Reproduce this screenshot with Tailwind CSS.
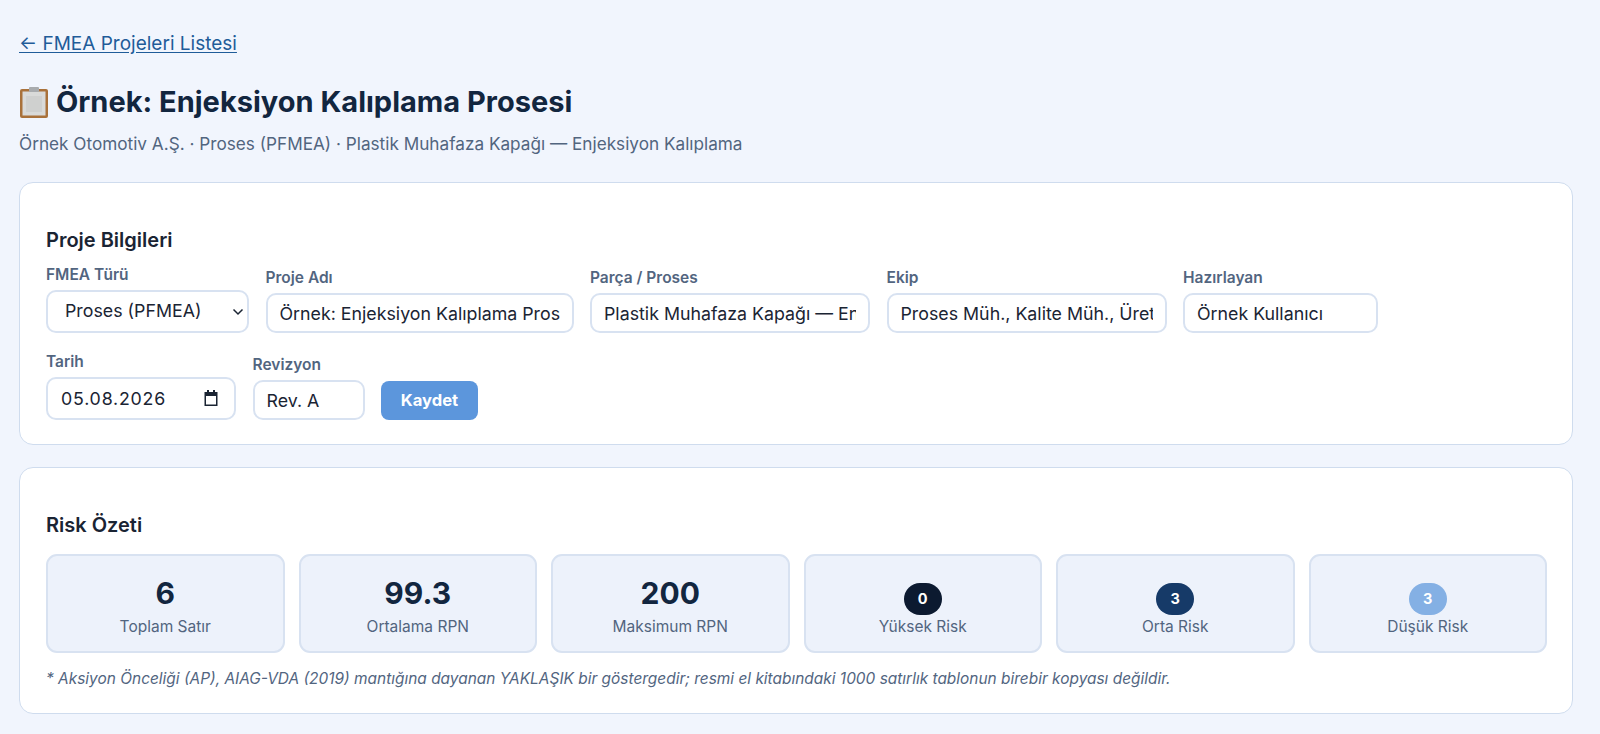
<!DOCTYPE html>
<html lang="tr">
<head>
  <meta charset="UTF-8" />
  <meta name="viewport" content="width=device-width, initial-scale=1.0"/>
  <title>Örnek: Enjeksiyon Kalıplama Prosesi</title>
  <script src="https://cdn.jsdelivr.net/npm/@tailwindcss/browser@4"></script>
</head>
<body class="bg-[#f1f5fd] text-[#12263f] font-['Inter','Liberation_Sans',sans-serif] overflow-hidden">
<div class="pl-[19px] pt-[32px] w-[1573px]">
  <a href="#" class="block text-[19px] leading-[24px] text-[#1f5c99] underline underline-offset-2">← FMEA Projeleri Listesi</a>

  <!-- Header -->
  <h1 class="flex items-center gap-[6px] mt-[26px] text-[29px] leading-[40px] font-bold text-[#12263f]">
    <svg width="31" height="32" viewBox="0 0 31 32" class="shrink-0">
      <rect x="1" y="3" width="28" height="29" rx="2" fill="#a9713a"/>
      <rect x="3.5" y="5.5" width="23" height="24" fill="#d9dad9"/>
      <rect x="7" y="10" width="16" height="16" fill="#cfd0cf"/>
      <rect x="10" y="1" width="10" height="5" rx="1" fill="#a8abae"/>
    </svg>
    <span>Örnek: Enjeksiyon Kalıplama Prosesi</span>
  </h1>
  <p class="mt-[11px] text-[17.2px] leading-[22px] text-[#52657f]">Örnek Otomotiv A.Ş. · Proses (PFMEA) · Plastik Muhafaza Kapağı — Enjeksiyon Kalıplama</p>

  <!-- Proje Bilgileri -->
  <section class="mt-[27px] h-[263px] bg-white border border-[#cfdcee] rounded-[14px] pl-[26px] pr-[25px] pt-[44px]">
    <h2 class="text-[20px] leading-[26px] font-semibold text-[#1a2433]">Proje Bilgileri</h2>
    <div class="mt-[13px] flex items-end gap-[16.5px]">
      <label class="block">
        <span class="block text-[15.5px] leading-[18px] font-semibold text-[#52657f] mb-[6px]">FMEA Türü</span>
        <div class="relative">
          <select class="block appearance-none w-[203px] h-[43px] border-2 border-[#d8e2f1] rounded-[10px] pl-[17px] text-[17.8px] text-[#1a2433] bg-white">
            <option>Proses (PFMEA)</option>
          </select>
          <svg width="12" height="8" viewBox="0 0 12 8" class="absolute right-[5px] top-[18px]" fill="none" stroke="#1a2433" stroke-width="1.5"><path d="M1.5 1.5 6 6l4.500-4.500"/></svg>
        </div>
      </label>
      <label class="block">
        <span class="block text-[15.5px] leading-[18px] font-semibold text-[#52657f] mb-[6px]">Proje Adı</span>
        <input type="text" value="Örnek: Enjeksiyon Kalıplama Prosesi" class="block w-[308px] h-[40px] border-2 border-[#d8e2f1] rounded-[10px] px-[12px] text-[17.8px] text-[#1a2433]" />
      </label>
      <label class="block">
        <span class="block text-[15.5px] leading-[18px] font-semibold text-[#52657f] mb-[6px]">Parça / Proses</span>
        <input type="text" value="Plastik Muhafaza Kapağı — Enjeksiyon Kalıplama" class="block w-[280px] h-[40px] border-2 border-[#d8e2f1] rounded-[10px] px-[12px] text-[17.8px] text-[#1a2433]" />
      </label>
      <label class="block">
        <span class="block text-[15.5px] leading-[18px] font-semibold text-[#52657f] mb-[6px]">Ekip</span>
        <input type="text" value="Proses Müh., Kalite Müh., Üretim Sorumlusu" class="block w-[280px] h-[40px] border-2 border-[#d8e2f1] rounded-[10px] px-[12px] text-[17.8px] text-[#1a2433]" />
      </label>
      <label class="block">
        <span class="block text-[15.5px] leading-[18px] font-semibold text-[#52657f] mb-[6px]">Hazırlayan</span>
        <input type="text" value="Örnek Kullanıcı" class="block w-[195px] h-[40px] border-2 border-[#d8e2f1] rounded-[10px] px-[12px] text-[17.8px] text-[#1a2433]" />
      </label>
    </div>
    <div class="mt-[20px] flex items-end gap-[16.5px]">
      <label class="block">
        <span class="block text-[15.5px] leading-[18px] font-semibold text-[#52657f] mb-[6px]">Tarih</span>
        <div class="relative">
          <input type="text" value="05.08.2026" class="block w-[190px] h-[43px] border-2 border-[#d8e2f1] rounded-[10px] pl-[13px] text-[17.8px] tracking-[0.8px] text-[#1a2433]" />
          <svg width="16" height="16" viewBox="0 0 16 16" class="absolute right-[17px] top-[13px]" fill="#1a2433"><path d="M4 0h2v2h4V0h2v2h2.500v14H1.500V2H4zM3 6v8.500h10V6z"/></svg>
        </div>
      </label>
      <label class="block">
        <span class="block text-[15.5px] leading-[18px] font-semibold text-[#52657f] mb-[6px]">Revizyon</span>
        <input type="text" value="Rev. A" class="block w-[112px] h-[40px] border-2 border-[#d8e2f1] rounded-[10px] px-[12px] text-[17.8px] text-[#1a2433]" />
      </label>
      <button class="w-[97px] h-[39px] bg-[#5c96dc] text-white text-[16.6px] font-bold rounded-[8px]">Kaydet</button>
    </div>
  </section>

  <!-- Risk Özeti -->
  <section class="mt-[22px] h-[247px] bg-white border border-[#cfdcee] rounded-[14px] pl-[26px] pr-[25px] pt-[44px]">
    <h2 class="text-[20px] leading-[26px] font-semibold text-[#1a2433]">Risk Özeti</h2>
    <div class="mt-[16px] grid grid-cols-6 gap-[14px]">
      <div class="h-[99px] bg-[#edf2fb] border-2 border-[#d8e2f1] rounded-[11px] flex flex-col items-center pt-[19px]">
        <div class="text-[30px] leading-[36px] font-bold text-[#12263f]">6</div>
        <div class="mt-[6px] text-[15.5px] leading-[20px] text-[#52657f]">Toplam Satır</div>
      </div>
      <div class="h-[99px] bg-[#edf2fb] border-2 border-[#d8e2f1] rounded-[11px] flex flex-col items-center pt-[19px]">
        <div class="text-[30px] leading-[36px] font-bold text-[#12263f]">99.3</div>
        <div class="mt-[6px] text-[15.5px] leading-[20px] text-[#52657f]">Ortalama RPN</div>
      </div>
      <div class="h-[99px] bg-[#edf2fb] border-2 border-[#d8e2f1] rounded-[11px] flex flex-col items-center pt-[19px]">
        <div class="text-[30px] leading-[36px] font-bold text-[#12263f]">200</div>
        <div class="mt-[6px] text-[15.5px] leading-[20px] text-[#52657f]">Maksimum RPN</div>
      </div>
      <div class="h-[99px] bg-[#edf2fb] border-2 border-[#d8e2f1] rounded-[11px] flex flex-col items-center pt-[27px]">
        <div class="w-[38px] h-[32px] rounded-full bg-[#0c1a30] text-white text-[14.5px] font-bold flex items-center justify-center">0</div>
        <div class="mt-[2px] text-[15.5px] leading-[20px] text-[#52657f]">Yüksek Risk</div>
      </div>
      <div class="h-[99px] bg-[#edf2fb] border-2 border-[#d8e2f1] rounded-[11px] flex flex-col items-center pt-[27px]">
        <div class="w-[38px] h-[32px] rounded-full bg-[#163a68] text-white text-[14.5px] font-bold flex items-center justify-center">3</div>
        <div class="mt-[2px] text-[15.5px] leading-[20px] text-[#52657f]">Orta Risk</div>
      </div>
      <div class="h-[99px] bg-[#edf2fb] border-2 border-[#d8e2f1] rounded-[11px] flex flex-col items-center pt-[27px]">
        <div class="w-[38px] h-[32px] rounded-full bg-[#84b0e4] text-white text-[14.5px] font-bold flex items-center justify-center">3</div>
        <div class="mt-[2px] text-[15.5px] leading-[20px] text-[#52657f]">Düşük Risk</div>
      </div>
    </div>
    <p class="mt-[15px] text-[15.45px] leading-[22px] italic text-[#52657f]">* Aksiyon Önceliği (AP), AIAG-VDA (2019) mantığına dayanan YAKLAŞIK bir göstergedir; resmi el kitabındaki 1000 satırlık tablonun birebir kopyası değildir.</p>
  </section>
</div>
</body>
</html>
